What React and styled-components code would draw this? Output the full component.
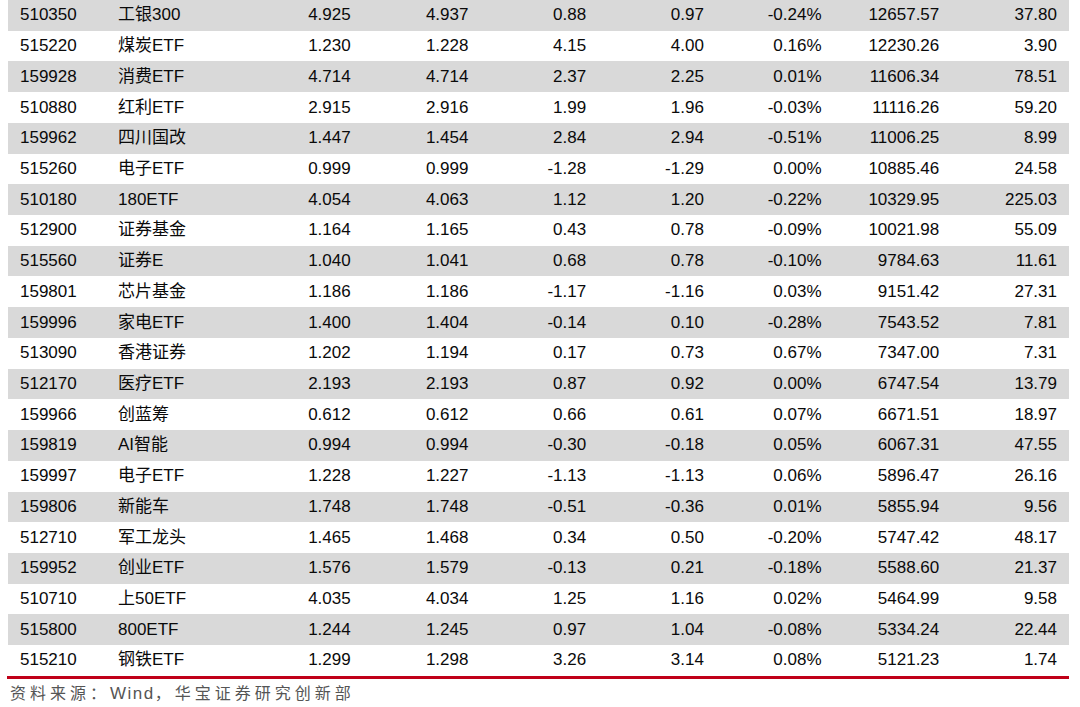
import React from 'react'
import styled, { createGlobalStyle } from 'styled-components'

const rows = [
  ['510350', '工银300', '4.925', '4.937', '0.88', '0.97', '-0.24%', '12657.57', '37.80'],
  ['515220', '煤炭ETF', '1.230', '1.228', '4.15', '4.00', '0.16%', '12230.26', '3.90'],
  ['159928', '消费ETF', '4.714', '4.714', '2.37', '2.25', '0.01%', '11606.34', '78.51'],
  ['510880', '红利ETF', '2.915', '2.916', '1.99', '1.96', '-0.03%', '11116.26', '59.20'],
  ['159962', '四川国改', '1.447', '1.454', '2.84', '2.94', '-0.51%', '11006.25', '8.99'],
  ['515260', '电子ETF', '0.999', '0.999', '-1.28', '-1.29', '0.00%', '10885.46', '24.58'],
  ['510180', '180ETF', '4.054', '4.063', '1.12', '1.20', '-0.22%', '10329.95', '225.03'],
  ['512900', '证券基金', '1.164', '1.165', '0.43', '0.78', '-0.09%', '10021.98', '55.09'],
  ['515560', '证券E', '1.040', '1.041', '0.68', '0.78', '-0.10%', '9784.63', '11.61'],
  ['159801', '芯片基金', '1.186', '1.186', '-1.17', '-1.16', '0.03%', '9151.42', '27.31'],
  ['159996', '家电ETF', '1.400', '1.404', '-0.14', '0.10', '-0.28%', '7543.52', '7.81'],
  ['513090', '香港证券', '1.202', '1.194', '0.17', '0.73', '0.67%', '7347.00', '7.31'],
  ['512170', '医疗ETF', '2.193', '2.193', '0.87', '0.92', '0.00%', '6747.54', '13.79'],
  ['159966', '创蓝筹', '0.612', '0.612', '0.66', '0.61', '0.07%', '6671.51', '18.97'],
  ['159819', 'AI智能', '0.994', '0.994', '-0.30', '-0.18', '0.05%', '6067.31', '47.55'],
  ['159997', '电子ETF', '1.228', '1.227', '-1.13', '-1.13', '0.06%', '5896.47', '26.16'],
  ['159806', '新能车', '1.748', '1.748', '-0.51', '-0.36', '0.01%', '5855.94', '9.56'],
  ['512710', '军工龙头', '1.465', '1.468', '0.34', '0.50', '-0.20%', '5747.42', '48.17'],
  ['159952', '创业ETF', '1.576', '1.579', '-0.13', '0.21', '-0.18%', '5588.60', '21.37'],
  ['510710', '上50ETF', '4.035', '4.034', '1.25', '1.16', '0.02%', '5464.99', '9.58'],
  ['515800', '800ETF', '1.244', '1.245', '0.97', '1.04', '-0.08%', '5334.24', '22.44'],
  ['515210', '钢铁ETF', '1.299', '1.298', '3.26', '3.14', '0.08%', '5121.23', '1.74'],
]

const Global = createGlobalStyle`
  body {
    margin: 0;
    background: #fff;
    font-family: "Liberation Sans", Arial, "Noto Sans CJK SC", sans-serif;
  }
`

const Page = styled.div`
  width: 1080px;
  padding-left: 7px;
  box-sizing: border-box;
`

const Table = styled.div`
  width: 1062px;
  border-bottom: 3px solid #c00018;
`

const Row = styled.div`
  display: grid;
  grid-template-columns: 98px 139px repeat(7, 1fr);
  height: 30.73px;
  align-items: center;
  margin-left: 1px;
  background: ${p => (p.$shaded ? '#d9d9d9' : '#fff')};
  font-size: 17px;
  line-height: 20px;
  color: #0a0a0a;
`

const Cell = styled.div`
  height: 20px;
  padding: 0 12px;
  text-align: ${p => (p.$left ? 'left' : 'right')};
  white-space: nowrap;
`

const Note = styled.div`
  padding: 4px 0 0 3px;
  height: 24px;
  line-height: 22px;
  font-family: "Liberation Sans", "Noto Sans CJK SC", sans-serif;
  font-size: 16px;
  letter-spacing: 4px;
  color: #555;
`

const Latin = styled.span`
  font-size: 17px;
  letter-spacing: 1.5px;
`

export default function App() {
  return (
    <Page>
      <Global />
      <Table>
        {rows.map((r, i) => (
          <Row key={r[0] + i} $shaded={i % 2 === 0}>
            {r.map((v, j) => (
              <Cell key={j} $left={j < 2}>{v}</Cell>
            ))}
          </Row>
        ))}
      </Table>
      <Note>
        资料来源：<Latin>Wind</Latin>，华宝证券研究创新部
      </Note>
    </Page>
  )
}
